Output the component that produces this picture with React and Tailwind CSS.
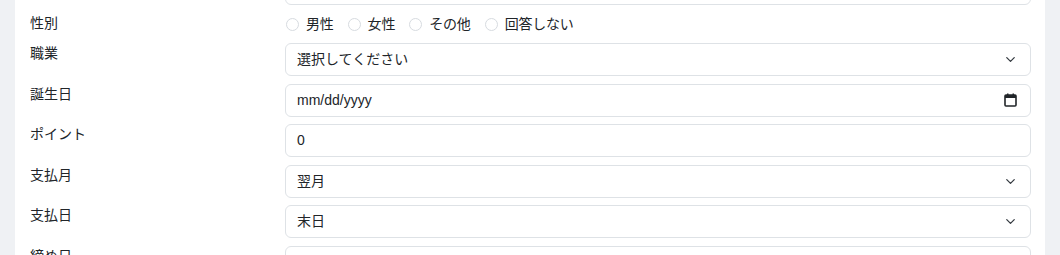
import { ChevronDown } from 'lucide-react';

const font = "font-['Helvetica_Neue','Liberation_Sans','Noto_Sans_CJK_JP',sans-serif]";

function Row({ label, children }) {
  return (
    <div className="flex">
      <div className="w-[255px] shrink-0 text-[14px] leading-[21px] text-[#212529]">{label}</div>
      <div className="flex-1">{children}</div>
    </div>
  );
}

function Box({ children, icon }) {
  return (
    <div className="flex h-[33px] items-center justify-between rounded-[6px] border border-[#dee2e6] bg-white pl-[11px] pr-[12px] text-[14px] text-[#212529]">
      <span>{children}</span>
      {icon}
    </div>
  );
}

const chevron = <ChevronDown className="h-[15px] w-[15px] text-[#343a40]" strokeWidth={2} />;

const calendar = (
  <svg width="13" height="14" viewBox="0 0 13 14" className="mr-[1px]">
    <rect x="1" y="2" width="11" height="11" rx="1" fill="none" stroke="#212529" strokeWidth="1.6" />
    <rect x="1" y="2" width="11" height="3" fill="#212529" />
    <rect x="3" y="0.5" width="1.5" height="2.5" fill="#212529" />
    <rect x="8.5" y="0.5" width="1.5" height="2.5" fill="#212529" />
  </svg>
);

function Radio({ label }) {
  return (
    <label className="flex items-center gap-[7px]">
      <span className="h-[13px] w-[13px] rounded-full border border-[#d7dbe0] bg-white" />
      <span className="tracking-[-0.2px]">{label}</span>
    </label>
  );
}

export default function App() {
  return (
    <div className={`h-[255px] overflow-hidden bg-[#eff1f4] px-[15px] ${font}`}>
      <div className="flex h-full flex-col overflow-hidden bg-white pl-[15px] pr-[14px]">
        <div className="-mt-[28px] flex flex-col gap-[7.5px]">
          <Row label="">
            <Box> </Box>
          </Row>
          <Row label="性別">
            <div className="flex h-[23px] items-center gap-[14px] pl-[1px] text-[14px] text-[#212529]">
              <Radio label="男性" />
              <Radio label="女性" />
              <Radio label="その他" />
              <Radio label="回答しない" />
            </div>
          </Row>
          <Row label="職業">
            <Box icon={chevron}>選択してください</Box>
          </Row>
          <Row label="誕生日">
            <Box icon={calendar}>mm/dd/yyyy</Box>
          </Row>
          <Row label="ポイント">
            <Box>0</Box>
          </Row>
          <Row label="支払月">
            <Box icon={chevron}>翌月</Box>
          </Row>
          <Row label="支払日">
            <Box icon={chevron}>末日</Box>
          </Row>
          <Row label="締め日">
            <Box icon={chevron}>末日</Box>
          </Row>
        </div>
      </div>
    </div>
  );
}
